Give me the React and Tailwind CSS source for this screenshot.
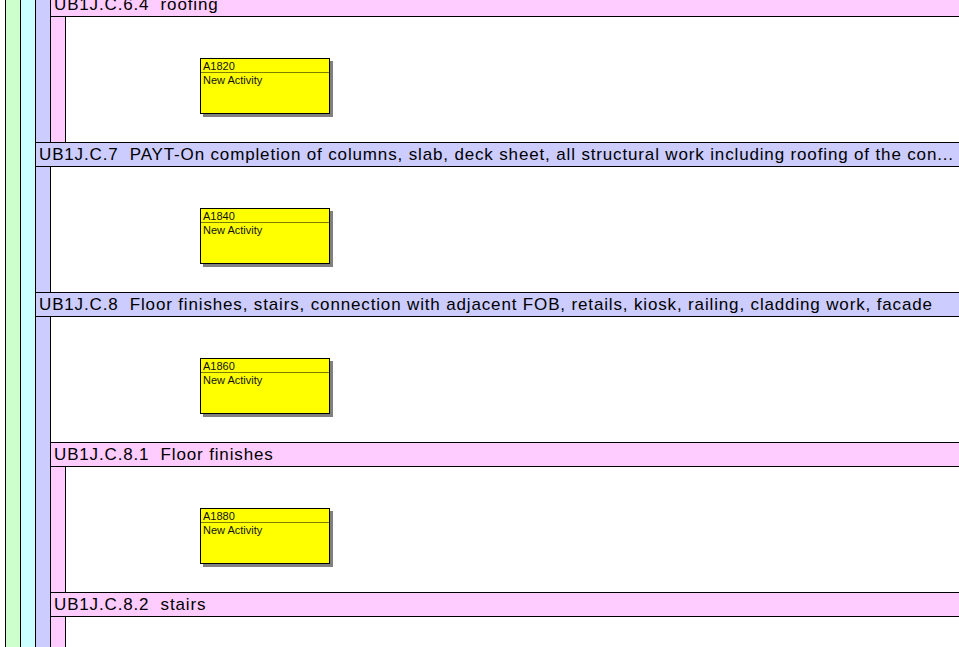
import React from 'react';

const ActivityBox = ({ id }) => (
  <div className="w-[130px] h-[56px] border border-black bg-[#ffff00] shadow-[3px_3px_0_#808080] text-[11px] leading-[13px] text-[#111] font-['Liberation_Sans',Arial,sans-serif]">
    <div className="h-[14px] border-b border-[#808000] pl-[2px] pt-[1px]">{id}</div>
    <div className="pl-[2px] pt-[1px]">New Activity</div>
  </div>
);

const Section = ({ tone, code, name, act, children }) => {
  const bg = tone === 'pink' ? 'bg-[#ffccff]' : 'bg-[#ccccff]';
  const bodyPad = tone === 'pink' ? 'pl-[134px]' : 'pl-[149px]';
  return (
    <div className={`border-l border-black ${bg}`}>
      <div className="h-[25px] border-y border-black pl-[3px] pt-[1px] text-[17px] leading-[22px] tracking-[0.85px] text-black whitespace-pre overflow-hidden font-['Liberation_Sans',Arial,sans-serif]">
        {code}  {name}
      </div>
      <div className="pl-[14px]">
        <div className={`h-[125px] border-l border-black bg-white pt-[41px] ${bodyPad}`}>
          {act && <ActivityBox id={act} />}
        </div>
        {children}
      </div>
    </div>
  );
};

export default function App() {
  return (
    <div className="w-[959px] h-[647px] overflow-hidden bg-white pl-[5px]">
      <div className="-mt-[8px]">
        <div className="border-l border-black bg-[#ccffcc] pl-[14px]">
          <div className="border-l border-black bg-[#ccffff] pl-[14px]">
            {/* UB1J.C.6 - header scrolled out of view */}
            <div className="border-l border-black bg-[#ccccff] pl-[14px]">
              <Section tone="pink" code="UB1J.C.6.4" name="roofing" act="A1820" />
            </div>
            <Section
              tone="lav"
              code="UB1J.C.7"
              name="PAYT-On completion of columns, slab, deck sheet, all structural work including roofing of the con..."
              act="A1840"
            />
            <Section
              tone="lav"
              code="UB1J.C.8"
              name="Floor finishes, stairs, connection with adjacent FOB, retails, kiosk, railing, cladding work, facade"
              act="A1860"
            >
              <Section tone="pink" code="UB1J.C.8.1" name="Floor finishes" act="A1880" />
              <Section tone="pink" code="UB1J.C.8.2" name="stairs" />
            </Section>
          </div>
        </div>
      </div>
    </div>
  );
}
